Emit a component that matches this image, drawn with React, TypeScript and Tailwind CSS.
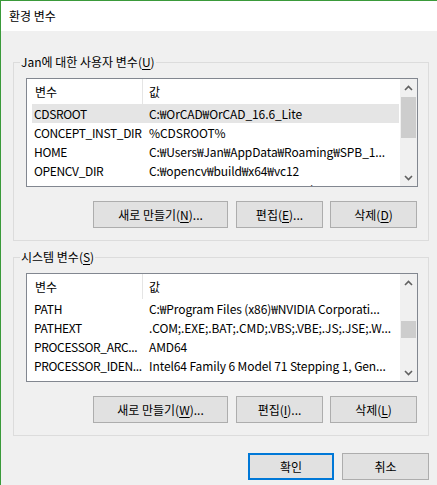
import React from "react";

const FONT = '"Noto Sans CJK KR", "Noto Sans", sans-serif';

function Mn({ children }: { children: React.ReactNode }) {
  return <span className="underline underline-offset-[2px]">{children}</span>;
}

function Chevron({ up }: { up?: boolean }) {
  return (
    <svg width="9" height="6" viewBox="0 0 9 6" className="block">
      <polyline
        points={up ? "1,5 4.5,1.5 8,5" : "1,1 4.5,4.5 8,1"}
        fill="none"
        stroke="#606060"
        strokeWidth="1.6"
      />
    </svg>
  );
}

function Btn({ w, children, def }: { w: string; children: React.ReactNode; def?: boolean }) {
  return (
    <div
      className={
        "h-[27px] flex items-center justify-center bg-[#e1e1e1] text-[12px] leading-[16px] text-black " +
        w +
        (def ? " border-2 border-[#0078d7]" : " border border-[#adadad]")
      }
    >
      {children}
    </div>
  );
}

type Row = [string, string];

function VarList({
  rows,
  selected,
  thumbTop,
  thumbH,
}: {
  rows: Row[];
  selected?: number;
  thumbTop: string;
  thumbH: string;
}) {
  return (
    <div className="h-[109px] border border-[#828790] bg-white flex overflow-hidden">
      <div className="flex-1 flex flex-col overflow-hidden">
        <div className="h-[25px] shrink-0 flex text-[12px] leading-[16px]">
          <div className="w-[116px] pl-[8px] flex items-center border-r border-[#e5e5e5]">변수</div>
          <div className="pl-[6px] flex items-center">값</div>
        </div>
        {rows.map(([n, v], i) => (
          <div
            key={i}
            className={
              "h-[19px] shrink-0 ml-[5px] mr-[1px] flex items-center text-[12px] leading-[16px] whitespace-nowrap " +
              (i === selected ? "bg-[#e5e5e5]" : "")
            }
          >
            <div className="w-[111px] pl-[2px] overflow-hidden tracking-[-0.35px]">{n}</div>
            <div className="flex-1 pl-[6px] overflow-hidden tracking-[-0.1px]">{v}</div>
          </div>
        ))}
      </div>
      <div className="w-[17px] shrink-0 bg-[#f0f0f0] flex flex-col">
        <div className="h-[17px] flex items-center justify-center">
          <Chevron up />
        </div>
        <div className="flex-1">
          <div className={"ml-[1px] w-[15px] bg-[#cdcdcd] " + thumbTop + " " + thumbH} />
        </div>
        <div className="h-[17px] flex items-center justify-center">
          <Chevron />
        </div>
      </div>
    </div>
  );
}

function Group({ label, children }: { label: React.ReactNode; children: React.ReactNode }) {
  return (
    <div className="relative w-[416px] border border-[#dcdcdc] pt-[15px] pl-[12px] pr-[10px] pb-[12px]">
      <div className="absolute top-[-9px] left-[6px] px-[1px] h-[16px] leading-[16px] bg-[#f0f0f0] text-[12px] text-black whitespace-nowrap">
        {label}
      </div>
      {children}
    </div>
  );
}

export default function App() {
  const userRows: Row[] = [
    ["CDSROOT", "C:₩OrCAD₩OrCAD_16.6_Lite"],
    ["CONCEPT_INST_DIR", "%CDSROOT%"],
    ["HOME", "C:₩Users₩Jan₩AppData₩Roaming₩SPB_1..."],
    ["OPENCV_DIR", "C:₩opencv₩build₩x64₩vc12"],
    ["", "C:₩Users₩Jan₩AppData₩Local₩Temp"],
  ];
  const sysRows: Row[] = [
    ["PATH", "C:₩Program Files (x86)₩NVIDIA Corporati..."],
    ["PATHEXT", ".COM;.EXE;.BAT;.CMD;.VBS;.VBE;.JS;.JSE;.W..."],
    ["PROCESSOR_ARC...", "AMD64"],
    ["PROCESSOR_IDEN...", "Intel64 Family 6 Model 71 Stepping 1, Gen..."],
  ];
  return (
    <div
      className="w-[437px] h-[485px] bg-[#f0f0f0] border-l border-t border-[#3a9a3a] flex flex-col text-black overflow-hidden"
      style={{ fontFamily: FONT }}
    >
      <div className="h-[30px] shrink-0 bg-white flex items-center pl-[8px] text-[12px] leading-[16px]">
        환경 변수
      </div>
      <div className="pl-[12px] pr-[8px] pt-[31px] flex flex-col">
        <Group
          label={
            <>
              Jan에 대한 사용자 변수(<Mn>U</Mn>)
            </>
          }
        >
          <VarList rows={userRows} selected={0} thumbTop="mt-[1px]" thumbH="h-[41px]" />
          <div className="mt-[14px] pr-[1px] flex justify-end">
            <Btn w="w-[135px]">
              새로 만들기(<Mn>N</Mn>)...
            </Btn>
            <div className="w-[8px]" />
            <Btn w="w-[87px]">
              편집(<Mn>E</Mn>)...
            </Btn>
            <div className="w-[7px]" />
            <Btn w="w-[87px]">
              삭제(<Mn>D</Mn>)
            </Btn>
          </div>
        </Group>
        <div className="h-[16px]" />
        <Group
          label={
            <>
              시스템 변수(<Mn>S</Mn>)
            </>
          }
        >
          <VarList rows={sysRows} thumbTop="mt-[30px]" thumbH="h-[17px]" />
          <div className="mt-[14px] pr-[1px] flex justify-end">
            <Btn w="w-[135px]">
              새로 만들기(<Mn>W</Mn>)...
            </Btn>
            <div className="w-[8px]" />
            <Btn w="w-[87px]">
              편집(<Mn>I</Mn>)...
            </Btn>
            <div className="w-[7px]" />
            <Btn w="w-[87px]">
              삭제(<Mn>L</Mn>)
            </Btn>
          </div>
        </Group>
        <div className="mt-[17px] flex justify-end gap-[8px]">
          <Btn w="w-[86px]" def>
            확인
          </Btn>
          <Btn w="w-[87px]">취소</Btn>
        </div>
      </div>
    </div>
  );
}
